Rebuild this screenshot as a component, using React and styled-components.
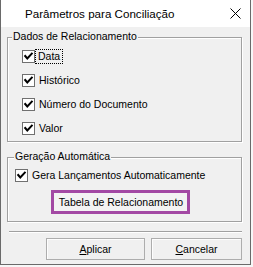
import React from "react";
import styled, { createGlobalStyle } from "styled-components";

const Global = createGlobalStyle`
  html, body { margin: 0; padding: 0; background: #f7f7f7; }
  body { font-family: "Liberation Sans", Arial, sans-serif; }
  #root { width: 253px; height: 267px; }
`;

const Window = styled.div`
  width: 251px;
  height: 265px;
  box-sizing: border-box;
  background: #f0f0f0;
  border: 1px solid #6a6a6a;
  border-top: none;
  display: flex;
  flex-direction: column;
  color: #000;
`;

const TitleBar = styled.div`
  height: 27px;
  flex: none;
  background: #fff;
  display: flex;
  align-items: center;
  justify-content: space-between;
  padding: 0 9px 0 24px;
`;

const Title = styled.span`
  font-size: 11.6px;
  line-height: 27px;
  letter-spacing: 0;
`;

const Body = styled.div`
  flex: 1;
  display: flex;
  flex-direction: column;
  padding: 10px 8px 0 6px;
`;

const Group = styled.div`
  position: relative;
  box-sizing: border-box;
  height: ${(p) => p.$h}px;
  border: 1px solid #a0a0a0;
  box-shadow: inset 1px 1px 0 #fff, 1px 1px 0 #fff;
  padding: ${(p) => p.$pad};
  margin-top: ${(p) => p.$mt || 0}px;
  display: flex;
  flex-direction: column;
  gap: ${(p) => p.$gap || 0}px;
  align-items: flex-start;
`;

const Legend = styled.span`
  position: absolute;
  top: -8px;
  left: ${(p) => p.$left}px;
  padding: 0 1px;
  background: #f0f0f0;
  font-size: 10.5px;
  line-height: 13px;
`;

const Row = styled.label`
  display: flex;
  align-items: center;
  height: 13px;
  gap: ${(p) => (p.$focus ? 1 : 2)}px;
`;

const Label = styled.span`
  font-size: 10.5px;
  line-height: 11px;
  padding: 0 1px;
  outline: ${(p) => (p.$focus ? "1px dotted #000" : "none")};
  outline-offset: 0;
  border: 1px solid transparent;
`;

const HighlightButton = styled.div`
  box-sizing: border-box;
  width: 139px;
  height: 24px;
  margin-left: 36px;
  border: 3px solid #a349a4;
  background: #f3f3f3;
  display: flex;
  align-items: center;
  justify-content: center;
  font-size: 10.5px;
  padding-left: 1px;
`;

const Separator = styled.div`
  height: 1px;
  margin: 9px 0 0 2px;
  background: #a0a0a0;
  border-bottom: 1px solid #fff;
`;

const ButtonRow = styled.div`
  display: flex;
  justify-content: flex-end;
  gap: 6px;
  margin-top: 5px;
`;

const Button = styled.div`
  box-sizing: border-box;
  width: ${(p) => p.$w}px;
  height: 22px;
  border: 1px solid #adadad;
  background: #f0f0f0;
  box-shadow: inset 1px 1px 0 #fdfdfd;
  display: flex;
  align-items: center;
  justify-content: center;
  font-size: 10.5px;
`;

const Mn = styled.span`
  text-decoration: underline;
  text-underline-offset: 1px;
`;

const CheckIcon = () => (
  <svg width="13" height="13" viewBox="0 0 13 13" style={{ flex: "none" }}>
    <rect x="0.5" y="0.5" width="12" height="12" fill="#fff" stroke="#707070" />
    <path d="M3.2 6 L5.3 8.4 L9.8 3.6" fill="none" stroke="#000" strokeWidth="2" strokeLinecap="square" />
  </svg>
);

const CloseIcon = () => (
  <svg width="11" height="11" viewBox="0 0 11 11">
    <path d="M0.5 0.5 L10.5 10.5 M10.5 0.5 L0.5 10.5" stroke="#000" strokeWidth="1" fill="none" />
  </svg>
);

const Check = ({ children, focus }) => (
  <Row $focus={focus}>
    <CheckIcon />
    <Label $focus={focus}>{children}</Label>
  </Row>
);

export default function App() {
  return (
    <>
      <Global />
      <Window>
        <TitleBar>
          <Title>Parâmetros para Conciliação</Title>
          <CloseIcon />
        </TitleBar>
        <Body>
          <Group $h={105} $pad="12px 0 0 14px" $gap={11}>
            <Legend $left={4}>Dados de Relacionamento</Legend>
            <Check focus>Data</Check>
            <Check>Histórico</Check>
            <Check>Número do Documento</Check>
            <Check>Valor</Check>
          </Group>
          <Group $h={65} $mt={15} $pad="11px 0 0 7px" $gap={8}>
            <Legend $left={6}>Geração Automática</Legend>
            <Check>Gera Lançamentos Automaticamente</Check>
            <HighlightButton>Tabela de Relacionamento</HighlightButton>
          </Group>
          <Separator />
          <ButtonRow>
            <Button $w={99}>
              <span><Mn>A</Mn>plicar</span>
            </Button>
            <Button $w={91}>
              <span><Mn>C</Mn>ancelar</span>
            </Button>
          </ButtonRow>
        </Body>
      </Window>
    </>
  );
}
